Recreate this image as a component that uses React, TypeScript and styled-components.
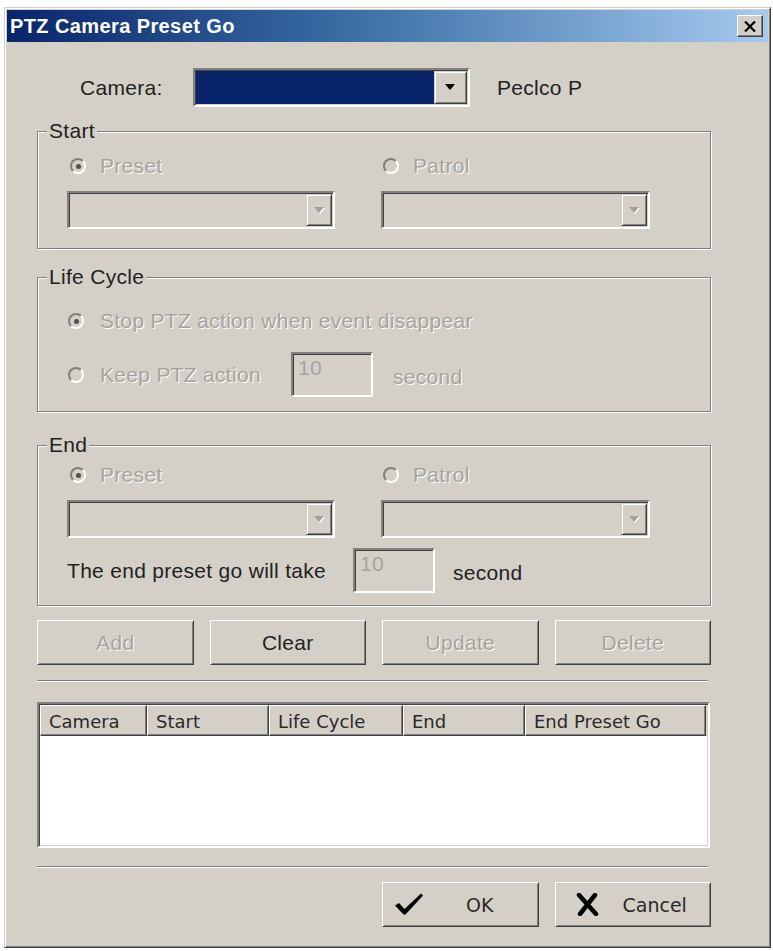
import React from 'react';
import styled, { createGlobalStyle } from 'styled-components';

const GlobalStyle = createGlobalStyle`
  html, body {
    margin: 0;
    padding: 0;
    background: #ffffff;
  }
  body {
    font-family: "Liberation Sans", Arial, sans-serif;
  }
`;

const FACE = '#d4d0c8';
const SHADOW = '#808080';
const DARK = '#404040';
const GRAY_TEXT = '#a6a39c';

const Window = styled.div`
  width: 767px;
  box-sizing: border-box;
  margin: 7px 0 0 4px;
  padding: 2px;
  background: ${FACE};
  border: 1px solid;
  border-color: ${FACE} ${DARK} ${DARK} ${FACE};
  box-shadow: inset 1px 1px 0 #ffffff, inset -1px -1px 0 ${SHADOW};
`;

const TitleBar = styled.div`
  height: 32px;
  display: flex;
  align-items: center;
  justify-content: space-between;
  padding: 0 5px 0 3px;
  background: linear-gradient(to right, #0a246a 0%, #3a6ea5 45%, #a6caf0 100%);
`;

const TitleText = styled.span`
  color: #ffffff;
  font-weight: 700;
  font-size: 20px;
  letter-spacing: 0.4px;
`;

const CloseButton = styled.div`
  width: 26px;
  height: 22px;
  box-sizing: border-box;
  display: flex;
  align-items: center;
  justify-content: center;
  background: ${FACE};
  border: 1px solid;
  border-color: #ffffff ${DARK} ${DARK} #ffffff;
  box-shadow: inset -1px -1px 0 ${SHADOW};
`;

const Body = styled.div`
  padding: 26px 57px 18px 30px;
  color: #222222;
  font-size: 21px;
  letter-spacing: 0.3px;
`;

const FieldRow = styled.div`
  display: flex;
  align-items: center;
  height: 39px;
`;

const FieldLabel = styled.span`
  width: 156px;
  box-sizing: border-box;
  padding-left: 43px;
  white-space: nowrap;
`;

const DeviceName = styled.span`
  margin-left: 27px;
  white-space: nowrap;
`;

const ComboBox = styled.div<{ $width: number; $height: number }>`
  width: ${p => p.$width}px;
  height: ${p => p.$height}px;
  box-sizing: border-box;
  display: flex;
  border: 2px solid;
  border-color: ${SHADOW} #ffffff #ffffff ${SHADOW};
  box-shadow: inset 1px 1px 0 ${DARK}, inset -1px -1px 0 ${FACE};
  background: ${FACE};
`;

const ComboField = styled.div<{ $selected?: boolean }>`
  flex: 1;
  margin: 1px 0 1px 1px;
  background: ${p => (p.$selected ? '#0a246a' : FACE)};
`;

const DropButton = styled.div<{ $width: number }>`
  width: ${p => p.$width}px;
  box-sizing: border-box;
  margin: 1px 1px 1px 0;
  display: flex;
  align-items: center;
  justify-content: center;
  background: ${FACE};
  border: 1px solid;
  border-color: ${FACE} ${DARK} ${DARK} ${FACE};
  box-shadow: inset 1px 1px 0 #ffffff, inset -1px -1px 0 ${SHADOW};
`;

const GroupBox = styled.fieldset<{ $mt: number; $pt: number; $pb: number }>`
  margin: ${p => p.$mt}px 0 0;
  padding: ${p => p.$pt}px 0 ${p => p.$pb}px 29px;
  width: 674px;
  min-width: 0;
  box-sizing: border-box;
  border: 1px solid ${SHADOW};
  box-shadow: inset 1px 1px 0 #ffffff, 1px 1px 0 #ffffff;
`;

const Legend = styled.legend`
  margin-left: -20px;
  padding: 0 2px;
  line-height: 24px;
  background: ${FACE};
  color: #222222;
`;

const Columns = styled.div`
  display: grid;
  grid-template-columns: 268px 269px;
  column-gap: 46px;
  row-gap: 13px;
`;

const OptionRow = styled.div<{ $mt?: number }>`
  display: flex;
  align-items: center;
  min-height: 24px;
  margin-top: ${p => p.$mt ?? 0}px;
`;

const Radio = styled.span<{ $checked?: boolean; $ml?: number; $gap?: number }>`
  flex: none;
  width: 16px;
  height: 16px;
  box-sizing: border-box;
  margin: 0 ${p => p.$gap ?? 14}px 0 ${p => p.$ml ?? 3}px;
  border-radius: 50%;
  border: 2px solid;
  border-color: ${SHADOW} #ffffff #ffffff ${SHADOW};
  background: ${FACE};
  display: flex;
  align-items: center;
  justify-content: center;

  &::after {
    content: '';
    width: 5px;
    height: 5px;
    border-radius: 50%;
    background: ${p => (p.$checked ? '#505050' : 'transparent')};
  }
`;

const Caption = styled.span<{ $disabled?: boolean; $width?: number }>`
  white-space: nowrap;
  ${p => (p.$width ? `width: ${p.$width}px; flex: none;` : '')}
  color: ${p => (p.$disabled ? GRAY_TEXT : '#222222')};
  text-shadow: ${p => (p.$disabled ? '1px 1px 0 #ffffff' : 'none')};
`;

const ValueBox = styled.div`
  width: 82px;
  height: 45px;
  box-sizing: border-box;
  flex: none;
  padding: 2px 0 0 5px;
  line-height: 24px;
  color: #a4a4a4;
  background: ${FACE};
  border: 2px solid;
  border-color: ${SHADOW} #ffffff #ffffff ${SHADOW};
  box-shadow: inset 1px 1px 0 ${DARK}, inset -1px -1px 0 ${FACE};
`;

const Unit = styled(Caption)<{ $ml: number }>`
  margin-left: ${p => p.$ml}px;
  padding-top: 4px;
`;

const ButtonGrid = styled.div<{ $mt: number }>`
  width: 674px;
  margin-top: ${p => p.$mt}px;
  display: grid;
  grid-template-columns: repeat(4, 1fr);
  column-gap: 16px;
`;

const PushButton = styled.div<{ $disabled?: boolean; $col?: number; $pl?: number; $gap?: number }>`
  height: 45px;
  box-sizing: border-box;
  display: flex;
  align-items: center;
  justify-content: ${p => (p.$pl !== undefined ? 'flex-start' : 'center')};
  padding-left: ${p => p.$pl ?? 0}px;
  gap: ${p => p.$gap ?? 0}px;
  ${p => (p.$col ? `grid-column: ${p.$col};` : '')}
  background: ${FACE};
  border: 1px solid;
  border-color: #ffffff ${DARK} ${DARK} #ffffff;
  box-shadow: inset 1px 1px 0 ${FACE}, inset -1px -1px 0 ${SHADOW};
  color: ${p => (p.$disabled ? GRAY_TEXT : '#222222')};
  text-shadow: ${p => (p.$disabled ? '1px 1px 0 #ffffff' : 'none')};
  white-space: nowrap;
`;

const DialogLabel = styled.span`
  font-family: "DejaVu Sans", Verdana, sans-serif;
  font-size: 19px;
  letter-spacing: 0;
  color: #2a2a2a;
`;

const Separator = styled.div<{ $mt: number }>`
  width: 671px;
  margin-top: ${p => p.$mt}px;
  border-top: 1px solid ${SHADOW};
  border-bottom: 1px solid #ffffff;
`;

const ListView = styled.div`
  width: 673px;
  height: 146px;
  margin-top: 20px;
  box-sizing: border-box;
  background: #ffffff;
  border: 2px solid;
  border-color: ${SHADOW} #ffffff #ffffff ${SHADOW};
  box-shadow: inset 1px 1px 0 ${DARK}, inset -1px -1px 0 ${FACE};
  padding: 1px 1px 0 1px;
`;

const HeaderRow = styled.div`
  display: flex;
  height: 31px;
  background: ${FACE};
`;

const HeaderCell = styled.div<{ $w: number }>`
  width: ${p => p.$w}px;
  flex: none;
  box-sizing: border-box;
  display: flex;
  align-items: center;
  padding: 2px 0 0 8px;
  border: 1px solid;
  border-color: #ffffff ${DARK} ${DARK} #ffffff;
  box-shadow: inset -1px -1px 0 ${SHADOW};
  font-family: "DejaVu Sans", Verdana, sans-serif;
  font-size: 18px;
  letter-spacing: 0;
  color: #2a2a2a;
  white-space: nowrap;
`;

const Arrow = ({ disabled }: { disabled?: boolean }) => (
  <svg width="11" height="7" viewBox="0 0 11 7">
    {disabled && <polygon points="1,1 11,1 6,7" fill="#ffffff" />}
    <polygon points="0,0 10,0 5,6" fill={disabled ? '#a0a0a0' : '#000000'} />
  </svg>
);

const Combo = ({ width, disabled, selected, button = 26 }: { width: number; disabled?: boolean; selected?: boolean; button?: number }) => (
  <ComboBox $width={width} $height={selected ? 39 : 38}>
    <ComboField $selected={selected} />
    <DropButton $width={button}>
      <Arrow disabled={disabled} />
    </DropButton>
  </ComboBox>
);

const CheckIcon = () => (
  <svg width="30" height="23" viewBox="0 0 30 23">
    <path d="M1 12.5 L5 10 L10.5 16 L27 0.5 L29 2.5 L11.5 21.5 L9.5 21.5 Z" fill="#000000" />
  </svg>
);

const CrossIcon = () => (
  <svg width="23" height="23" viewBox="0 0 23 23">
    <path d="M3 2 L20 21 M19 2 L4 21" stroke="#000000" strokeWidth="4.5" strokeLinecap="round" fill="none" />
  </svg>
);

const columns = [
  { title: 'Camera', w: 107 },
  { title: 'Start', w: 122 },
  { title: 'Life Cycle', w: 134 },
  { title: 'End', w: 122 },
  { title: 'End Preset Go', w: 181 },
];

const PresetPatrol = () => (
  <Columns>
    <OptionRow>
      <Radio $checked />
      <Caption $disabled>Preset</Caption>
    </OptionRow>
    <OptionRow>
      <Radio $ml={2} />
      <Caption $disabled>Patrol</Caption>
    </OptionRow>
    <Combo width={268} disabled />
    <Combo width={269} disabled />
  </Columns>
);

const App: React.FC = () => (
  <>
    <GlobalStyle />
    <Window>
      <TitleBar>
        <TitleText>PTZ Camera Preset Go</TitleText>
        <CloseButton>
          <svg width="12" height="11" viewBox="0 0 12 11">
            <path d="M1 0.5 L11 10.5 M11 0.5 L1 10.5" stroke="#000000" strokeWidth="2.2" />
          </svg>
        </CloseButton>
      </TitleBar>

      <Body>
        <FieldRow>
          <FieldLabel>Camera:</FieldLabel>
          <Combo width={277} selected button={33} />
          <DeviceName>Peclco P</DeviceName>
        </FieldRow>

        <GroupBox $mt={12} $pt={11} $pb={19}>
          <Legend>Start</Legend>
          <PresetPatrol />
        </GroupBox>

        <GroupBox $mt={16} $pt={20} $pb={14}>
          <Legend>Life Cycle</Legend>
          <OptionRow>
            <Radio $checked $ml={1} $gap={16} />
            <Caption $disabled>Stop PTZ action when event disappear</Caption>
          </OptionRow>
          <OptionRow $mt={19}>
            <Radio $ml={1} $gap={16} />
            <Caption $disabled $width={191}>Keep PTZ action</Caption>
            <ValueBox>10</ValueBox>
            <Unit $disabled $ml={20}>second</Unit>
          </OptionRow>
        </GroupBox>

        <GroupBox $mt={21} $pt={6} $pb={12}>
          <Legend>End</Legend>
          <PresetPatrol />
          <OptionRow $mt={10}>
            <Caption $width={286}>The end preset go will take</Caption>
            <ValueBox>10</ValueBox>
            <Unit $ml={18}>second</Unit>
          </OptionRow>
        </GroupBox>

        <ButtonGrid $mt={14}>
          <PushButton $disabled>Add</PushButton>
          <PushButton>Clear</PushButton>
          <PushButton $disabled>Update</PushButton>
          <PushButton $disabled>Delete</PushButton>
        </ButtonGrid>

        <Separator $mt={15} />

        <ListView>
          <HeaderRow>
            {columns.map(c => (
              <HeaderCell key={c.title} $w={c.w}>{c.title}</HeaderCell>
            ))}
          </HeaderRow>
        </ListView>

        <Separator $mt={18} />

        <ButtonGrid $mt={14}>
          <PushButton $col={3} $pl={11} $gap={42}>
            <CheckIcon />
            <DialogLabel>OK</DialogLabel>
          </PushButton>
          <PushButton $col={4} $pl={20} $gap={24}>
            <CrossIcon />
            <DialogLabel>Cancel</DialogLabel>
          </PushButton>
        </ButtonGrid>
      </Body>
    </Window>
  </>
);

export default App;
